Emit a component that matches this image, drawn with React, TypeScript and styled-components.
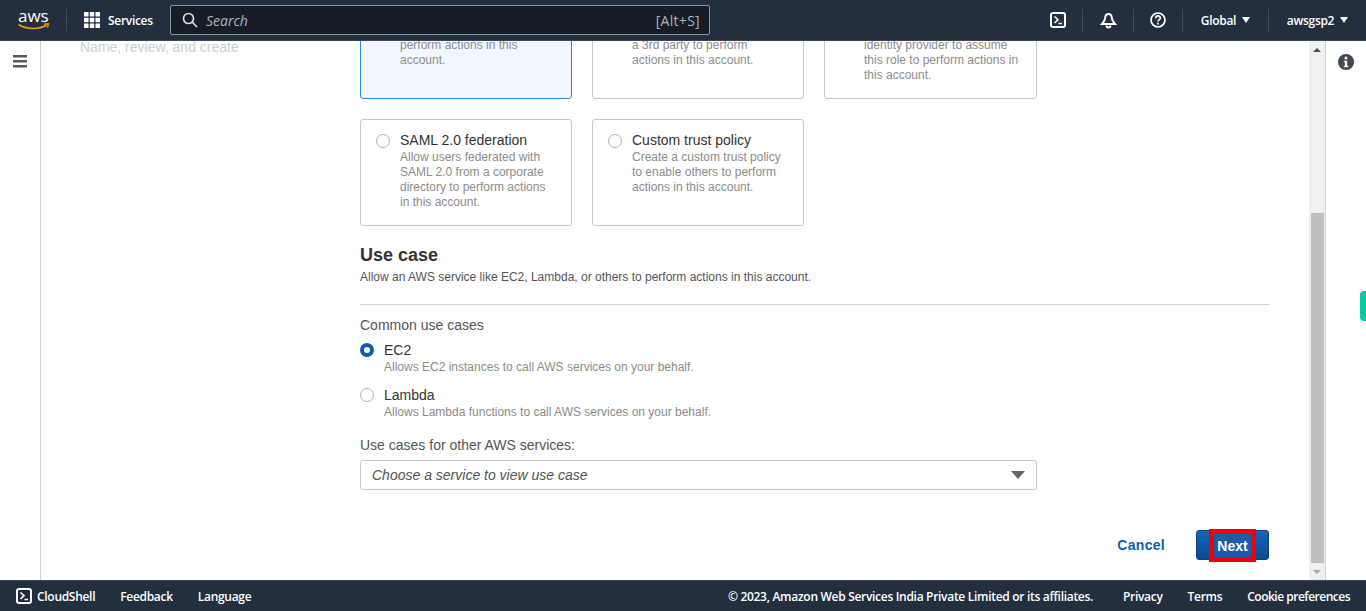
import styled, { createGlobalStyle } from 'styled-components';

const GlobalStyle = createGlobalStyle`
  html, body {
    margin: 0;
    padding: 0;
    height: 100%;
    overflow: hidden;
    background: #fff;
    font-family: "Liberation Sans", Arial, sans-serif;
  }
  * {
    box-sizing: border-box;
  }
`;

const Page = styled.div`
  width: 1366px;
  height: 611px;
  display: flex;
  flex-direction: column;
  overflow: hidden;
`;

const TopBar = styled.header`
  height: 41px;
  flex: none;
  display: flex;
  align-items: center;
  background: #232f3e;
  border-bottom: 1px solid #414750;
  font-family: "Open Sans", "Noto Sans", sans-serif;
  color: #fff;
`;

const LogoBox = styled.div`
  width: 67px;
  height: 22px;
  padding-left: 18px;
  border-right: 1px solid #414d5c;
  display: flex;
  align-items: center;
`;

const ServicesBtn = styled.div`
  display: flex;
  align-items: center;
  gap: 8px;
  margin-left: 17px;
  width: 86px;
  font-size: 12px;
  font-weight: 600;
  letter-spacing: -0.3px;
`;

const SearchBox = styled.div`
  width: 540px;
  height: 30px;
  display: flex;
  align-items: center;
  padding: 0 9px 0 11px;
  background: #161d26;
  border: 1px solid #879596;
  border-radius: 2px;
  color: #aab7b8;
  font-size: 14px;
`;

const SearchText = styled.span`
  font-style: italic;
  margin-left: 8px;
  flex: 1;
`;

const SearchKey = styled.span`
  letter-spacing: 0.3px;
`;

const TopRight = styled.div`
  margin-left: auto;
  display: flex;
  align-items: center;
  height: 100%;
`;

const TopItem = styled.div<{ $w: number; $plain?: boolean }>`
  width: ${(p) => p.$w}px;
  height: 23px;
  display: flex;
  align-items: center;
  justify-content: center;
  gap: 6px;
  font-size: 12px;
  font-weight: 600;
  letter-spacing: -0.3px;
  border-left: 1px solid ${(p) => (p.$plain ? 'transparent' : '#414d5c')};
`;

const Caret = styled.span`
  width: 0;
  height: 0;
  border-left: 4.5px solid transparent;
  border-right: 4.5px solid transparent;
  border-top: 6px solid #fff;
`;

const Body = styled.div`
  flex: 1;
  min-height: 0;
  display: flex;
`;

const LeftRail = styled.aside`
  width: 41px;
  flex: none;
  border-right: 1px solid #d0d0d0;
  display: flex;
  justify-content: center;
  padding-top: 14px;
`;

const StepsCol = styled.nav`
  width: 319px;
  flex: none;
  padding: 0 0 0 39px;
`;

const StepText = styled.div`
  font-size: 14px;
  line-height: 16px;
  color: #cfcfcf;
  margin-top: -2px;
`;

const Content = styled.main`
  flex: 1;
  min-width: 0;
  overflow: hidden;
  padding-right: 40px;
`;

const Column = styled.div`
  margin-top: -64px;
`;

const CardGrid = styled.div`
  display: grid;
  grid-template-columns: 212px 212px 213px;
  column-gap: 20px;
  row-gap: 20px;
`;

const Card = styled.div<{ $selected?: boolean; $tall?: boolean }>`
  height: ${(p) => (p.$tall ? 122 : 107)}px;
  border: 1px solid ${(p) => (p.$selected ? '#2b88dc' : '#c6c6c6')};
  border-radius: 3px;
  background: ${(p) => (p.$selected ? '#f0f7fe' : '#fff')};
  padding: 11px 10px 0 39px;
`;

const CardTitle = styled.div`
  font-size: 14px;
  line-height: 19px;
  color: #333;
`;

const Hint = styled.div`
  font-size: 12px;
  line-height: 15px;
  color: #8c8c8c;
`;

const CardRadio = styled.span`
  float: left;
  width: 14px;
  height: 14px;
  margin: 3px 0 0 -24px;
  border: 1px solid #b5b5b5;
  border-radius: 50%;
`;

const SectionTitle = styled.h2`
  margin: 18px 0 0;
  font-size: 18px;
  line-height: 22px;
  font-weight: 700;
  color: #333;
`;

const SectionSub = styled.p`
  margin: 4px 0 0;
  font-size: 12px;
  line-height: 15px;
  color: #555;
`;

const Divider = styled.hr`
  margin: 19px 0 0;
  border: 0;
  border-top: 1px solid #d0d0d0;
`;

const FieldLabel = styled.div<{ $mt: number }>`
  margin-top: ${(p) => p.$mt}px;
  font-size: 14px;
  line-height: 17px;
  color: #555;
`;

const RadioRow = styled.div<{ $mt: number }>`
  display: flex;
  gap: 10px;
  margin-top: ${(p) => p.$mt}px;
`;

const Radio = styled.span<{ $on?: boolean }>`
  width: 14px;
  height: 14px;
  flex: none;
  margin-top: 2px;
  border-radius: 50%;
  border: ${(p) => (p.$on ? '4px solid #0a5eb0' : '1px solid #b5b5b5')};
  background: #fff;
`;

const RadioBody = styled.div`
  ${CardTitle} {
    line-height: 18px;
    margin-bottom: 1px;
  }
`;

const Select = styled.div`
  width: 677px;
  height: 30px;
  margin-top: 6px;
  display: flex;
  align-items: center;
  justify-content: space-between;
  padding: 0 11px 0 11px;
  border: 1px solid #c6c6c6;
  border-radius: 3px;
  font-size: 14px;
  font-style: italic;
  color: #555;
`;

const SelectCaret = styled.span`
  width: 0;
  height: 0;
  border-left: 7.5px solid transparent;
  border-right: 7.5px solid transparent;
  border-top: 8px solid #666;
`;

const Actions = styled.div`
  margin-top: 40px;
  display: flex;
  align-items: center;
  justify-content: flex-end;
  gap: 31px;
`;

const CancelLink = styled.span`
  font-size: 14px;
  font-weight: 700;
  letter-spacing: 0.3px;
  color: #0a5eb0;
`;

const NextBtn = styled.div`
  position: relative;
  width: 73px;
  height: 30px;
  border: 1px solid #0a3f78;
  border-radius: 3px;
  background: linear-gradient(#1166bb, #0a4a8c);
  color: #fff;
  font-size: 14px;
  font-weight: 700;
`;

const Highlight = styled.span`
  position: absolute;
  left: 12px;
  top: -2px;
  width: 47px;
  height: 33px;
  border: 5px solid #ee0011;
  background: #1a5da5;
  display: flex;
  align-items: center;
  justify-content: center;
`;

const Scrollbar = styled.div`
  width: 17px;
  flex: none;
  display: flex;
  flex-direction: column;
  align-items: center;
  background: #f0f0f0;
  border-right: 1px solid #d0d0d0;
`;

const ScrollArrow = styled.span<{ $up?: boolean }>`
  height: ${(p) => (p.$up ? 18 : 17)}px;
  flex: none;
  display: flex;
  align-items: center;
  &::before {
    content: '';
    border-left: 4px solid transparent;
    border-right: 4px solid transparent;
    ${(p) => (p.$up ? 'border-bottom: 4px solid #505050;' : 'border-top: 4px solid #a3a3a3;')}
  }
`;

const ScrollTrack = styled.div`
  flex: 1;
  align-self: stretch;
  display: flex;
  flex-direction: column;
  justify-content: flex-end;
`;

const ScrollThumb = styled.div`
  height: 350px;
  margin-left: 2px;
  width: 13px;
  background: #bdbdbd;
`;

const RightRail = styled.aside`
  width: 40px;
  flex: none;
  position: relative;
  display: flex;
  justify-content: center;
  padding-top: 13px;
`;

const GreenTab = styled.span`
  position: absolute;
  right: 0;
  top: 250px;
  width: 6px;
  height: 30px;
  background: #06c9a0;
  border-radius: 4px 0 0 4px;
  box-shadow: 0 0 14px rgba(0, 0, 0, 0.05);
`;

const BottomBar = styled.footer`
  height: 31px;
  flex: none;
  display: flex;
  align-items: center;
  background: #232f3e;
  border-top: 1px solid #414750;
  color: #fff;
  font-family: "Open Sans", "Noto Sans", sans-serif;
  font-size: 12px;
  font-weight: 600;
  letter-spacing: -0.3px;
  padding: 0 16px;
`;

const FootLink = styled.span<{ $gap: number; $tight?: boolean }>`
  margin-left: ${(p) => p.$gap}px;
  ${(p) => (p.$tight ? 'letter-spacing: -0.5px;' : '')}
`;

const Copyright = styled.span`
  margin-left: auto;
`;

function ShellIcon() {
  return (
    <svg width="16" height="16" viewBox="0 0 16 16" fill="none" stroke="#fff" strokeWidth="2">
      <rect x="1" y="1" width="14" height="14" rx="2" />
      <path d="M4.5 4.5 8 7.7 4.5 11M8.5 11.5h3.5" strokeWidth="1.6" />
    </svg>
  );
}

export default function App() {
  return (
    <Page>
      <GlobalStyle />
      <TopBar>
        <LogoBox>
          <svg width="32" height="22" viewBox="0 0 32 22">
            <text x="0" y="13" fontFamily="'Open Sans', sans-serif" fontSize="17" fill="#fff">aws</text>
            <path d="M0.5 15.5c8 5.2 20 5.2 28 .8" fill="none" stroke="#f90" strokeWidth="1.6" />
            <path d="M26 15.2l4.5-.4-1 3.8" fill="none" stroke="#f90" strokeWidth="1.3" />
          </svg>
        </LogoBox>
        <ServicesBtn>
          <svg width="16" height="16" viewBox="0 0 16 16" fill="#fff">
            {[0, 5.75, 11.5].flatMap((y) =>
              [0, 5.75, 11.5].map((x) => <rect key={`${x}-${y}`} x={x} y={y} width="4.5" height="4.5" rx="0.5" />)
            )}
          </svg>
          Services
        </ServicesBtn>
        <SearchBox>
          <svg width="16" height="16" viewBox="0 0 16 16" fill="none" stroke="#d5dbdb" strokeWidth="1.7">
            <circle cx="6.5" cy="6.5" r="5" />
            <path d="M10.2 10.2 15 15" />
          </svg>
          <SearchText>Search</SearchText>
          <SearchKey>[Alt+S]</SearchKey>
        </SearchBox>
        <TopRight>
          <TopItem $w={50} $plain>
            <ShellIcon />
          </TopItem>
          <TopItem $w={51}>
            <svg width="17" height="17" viewBox="0 0 17 17" fill="none" stroke="#fff" strokeWidth="2">
              <path d="M8.5 2c-2.3 0-3.2 1.8-3.3 3.8-.1 2.6-1.500 4.200-3.200 6.200h13c-1.700-2-3.100-3.600-3.200-6.200C11.700 3.800 10.800 2 8.500 2Z" />
              <path d="M6.5 13.5a2 2 0 0 0 4 0" />
            </svg>
          </TopItem>
          <TopItem $w={49}>
            <svg width="16" height="16" viewBox="0 0 16 16" fill="none" stroke="#fff" strokeWidth="1.7">
              <circle cx="8" cy="8" r="7" />
              <path d="M5.8 6.2c0-3 4.500-3 4.500-.2 0 1.700-2.300 1.600-2.300 3.500" />
              <path d="M8 10.800v1.700" />
            </svg>
          </TopItem>
          <TopItem $w={86}>
            Global <Caret />
          </TopItem>
          <TopItem $w={98}>
            awsgsp2 <Caret />
          </TopItem>
        </TopRight>
      </TopBar>
      <Body>
        <LeftRail>
          <svg width="14" height="13" viewBox="0 0 14 13" fill="#545b64">
            <rect y="0" width="14" height="2.5" />
            <rect y="5" width="14" height="2.5" />
            <rect y="10" width="14" height="2.5" />
          </svg>
        </LeftRail>
        <StepsCol>
          <StepText>Name, review, and create</StepText>
        </StepsCol>
        <Content>
          <Column>
            <CardGrid>
              <Card $selected $tall>
                <CardRadio />
                <CardTitle>AWS service</CardTitle>
                <Hint>Allow AWS services like EC2,<br />Lambda, or others to<br />perform actions in this<br />account.</Hint>
              </Card>
              <Card $tall>
                <CardRadio />
                <CardTitle>AWS account</CardTitle>
                <Hint>Allow entities in other AWS<br />accounts belonging to you or<br />a 3rd party to perform<br />actions in this account.</Hint>
              </Card>
              <Card $tall>
                <CardRadio />
                <CardTitle>Web identity</CardTitle>
                <Hint>Allows users federated by the<br />specified external web<br />identity provider to assume<br />this role to perform actions in<br />this account.</Hint>
              </Card>
              <Card>
                <CardRadio />
                <CardTitle>SAML 2.0 federation</CardTitle>
                <Hint>Allow users federated with<br />SAML 2.0 from a corporate<br />directory to perform actions<br />in this account.</Hint>
              </Card>
              <Card>
                <CardRadio />
                <CardTitle>Custom trust policy</CardTitle>
                <Hint>Create a custom trust policy<br />to enable others to perform<br />actions in this account.</Hint>
              </Card>
            </CardGrid>
            <SectionTitle>Use case</SectionTitle>
            <SectionSub>Allow an AWS service like EC2, Lambda, or others to perform actions in this account.</SectionSub>
            <Divider />
            <FieldLabel $mt={12}>Common use cases</FieldLabel>
            <RadioRow $mt={7}>
              <Radio $on />
              <RadioBody>
                <CardTitle>EC2</CardTitle>
                <Hint>Allows EC2 instances to call AWS services on your behalf.</Hint>
              </RadioBody>
            </RadioRow>
            <RadioRow $mt={11}>
              <Radio />
              <RadioBody>
                <CardTitle>Lambda</CardTitle>
                <Hint>Allows Lambda functions to call AWS services on your behalf.</Hint>
              </RadioBody>
            </RadioRow>
            <FieldLabel $mt={17}>Use cases for other AWS services:</FieldLabel>
            <Select>
              Choose a service to view use case
              <SelectCaret />
            </Select>
            <Actions>
              <CancelLink>Cancel</CancelLink>
              <NextBtn>
                <Highlight>Next</Highlight>
              </NextBtn>
            </Actions>
          </Column>
        </Content>
        <Scrollbar>
          <ScrollArrow $up />
          <ScrollTrack>
            <ScrollThumb />
          </ScrollTrack>
          <ScrollArrow />
        </Scrollbar>
        <RightRail>
          <svg width="16" height="16" viewBox="0 0 16 16">
            <circle cx="8" cy="8" r="8" fill="#414750" />
            <circle cx="8" cy="4" r="1.6" fill="#fff" />
            <path d="M5.8 6.8h3.400v5h1.200v1.400H5.700v-1.400h1.200V8.200H5.800Z" fill="#fff" />
          </svg>
          <GreenTab />
        </RightRail>
      </Body>
      <BottomBar>
        <ShellIcon />
        <FootLink $gap={5}>CloudShell</FootLink>
        <FootLink $gap={25}>Feedback</FootLink>
        <FootLink $gap={25}>Language</FootLink>
        <Copyright>© 2023, Amazon Web Services India Private Limited or its affiliates.</Copyright>
        <FootLink $gap={30}>Privacy</FootLink>
        <FootLink $gap={25}>Terms</FootLink>
        <FootLink $gap={25} $tight>Cookie preferences</FootLink>
      </BottomBar>
    </Page>
  );
}
